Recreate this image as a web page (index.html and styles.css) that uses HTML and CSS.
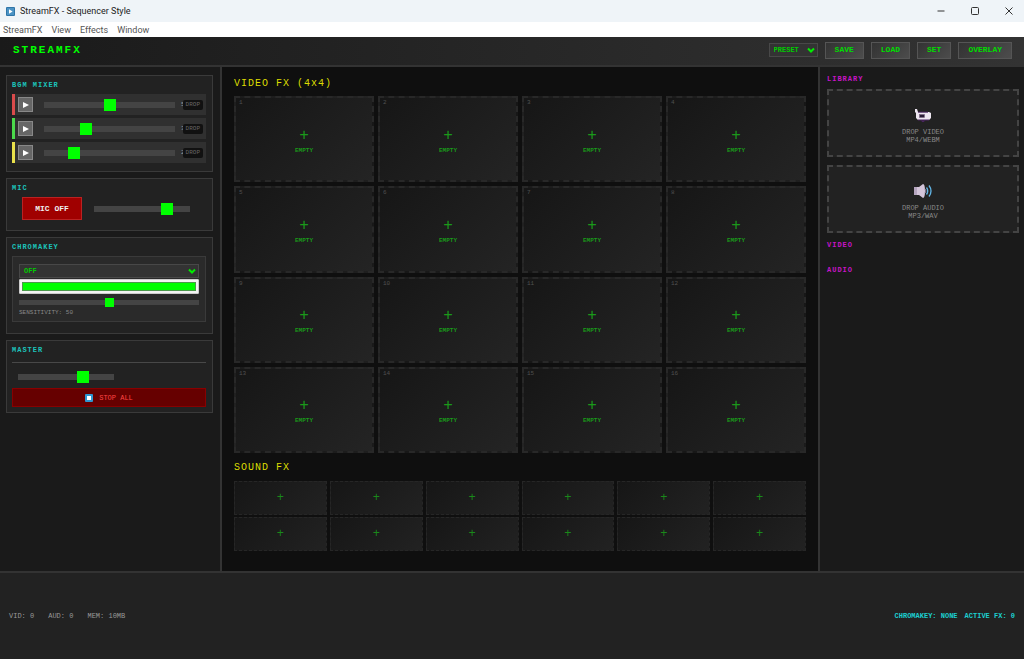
FILE: index.html
```html
<!DOCTYPE html>
<html lang="en">
<head>
  <meta charset="UTF-8">
  <meta name="viewport" content="width=device-width, initial-scale=1.0">
  <title>StreamFX - Sequencer Style</title>
  <link rel="stylesheet" href="styles.css">
</head>
<body>
  <div class="titlebar">
    <svg class="app-icon" viewBox="0 0 9 9"><rect width="9" height="9" rx="1" fill="#2f75a8"/><rect x="1" y="1" width="7" height="7" fill="#4b93c4"/><path d="M3 2.2 6.6 4.5 3 6.8Z" fill="#fff"/></svg>
    <span class="app-title">StreamFX - Sequencer Style</span>
    <div class="window-controls">
      <button aria-label="Minimize"><svg viewBox="0 0 10 10"><path d="M1.5 5H8.5"/></svg></button>
      <button aria-label="Maximize"><svg viewBox="0 0 10 10"><rect x="1.5" y="1.5" width="7" height="7" rx="1"/></svg></button>
      <button aria-label="Close"><svg viewBox="0 0 10 10"><path d="M1.5 1.5 8.5 8.5M8.5 1.5 1.5 8.5"/></svg></button>
    </div>
  </div>

  <nav class="menubar">
    <a href="#">StreamFX</a>
    <a href="#">View</a>
    <a href="#">Effects</a>
    <a href="#">Window</a>
  </nav>

  <header class="header">
    <h1>STREAMFX</h1>
    <div class="header-controls">
      <div class="select-wrap preset">
        <select aria-label="Preset"><option>PRESET</option></select>
        <svg viewBox="0 0 8 6"><path d="M1 1.5 4 4.5 7 1.5"/></svg>
      </div>
      <button class="btn">SAVE</button>
      <button class="btn">LOAD</button>
      <button class="btn">SET</button>
      <button class="btn">OVERLAY</button>
    </div>
  </header>

  <main class="main">
    <!-- Left: mixer controls -->
    <aside class="controls">
      <section class="panel panel-bgm">
        <h2>BGM MIXER</h2>
        <div class="tracks">
          <div class="track track-red">
            <button class="play" aria-label="Play track 1"><svg viewBox="0 0 6 6"><path d="M0 0 6 3 0 6Z"/></svg></button>
            <input type="range" value="50" aria-label="Track 1 volume">
            <span class="volume">50</span>
            <span class="drop-tag">DROP</span>
          </div>
          <div class="track track-green">
            <button class="play" aria-label="Play track 2"><svg viewBox="0 0 6 6"><path d="M0 0 6 3 0 6Z"/></svg></button>
            <input type="range" value="30" aria-label="Track 2 volume">
            <span class="volume">30</span>
            <span class="drop-tag">DROP</span>
          </div>
          <div class="track track-yellow">
            <button class="play" aria-label="Play track 3"><svg viewBox="0 0 6 6"><path d="M0 0 6 3 0 6Z"/></svg></button>
            <input type="range" value="20" aria-label="Track 3 volume">
            <span class="volume">20</span>
            <span class="drop-tag">DROP</span>
          </div>
        </div>
      </section>

      <section class="panel panel-mic">
        <h2>MIC</h2>
        <div class="mic-row">
          <button class="mic-btn">MIC OFF</button>
          <input type="range" class="short" value="80" aria-label="Mic volume">
        </div>
      </section>

      <section class="panel panel-chroma">
        <h2>CHROMAKEY</h2>
        <div class="chroma-box">
          <div class="select-wrap">
            <select aria-label="Chromakey mode"><option>OFF</option></select>
            <svg viewBox="0 0 8 6"><path d="M1 1.5 4 4.5 7 1.5"/></svg>
          </div>
          <input type="color" value="#00ff00" aria-label="Key colour">
          <input type="range" class="thin" id="sensitivity" value="50">
          <label for="sensitivity">SENSITIVITY: 50</label>
        </div>
      </section>

      <section class="panel panel-master">
        <h2>MASTER</h2>
        <div class="master-row">
          <input type="range" class="short" value="70" aria-label="Master volume">
        </div>
        <button class="stop-btn">
          <svg viewBox="0 0 8 8"><rect width="8" height="8" rx="1" fill="#2e96d0"/><rect x="2" y="2" width="4" height="4" fill="#fff"/></svg>
          STOP ALL
        </button>
      </section>
    </aside>

    <!-- Center: effect pads -->
    <section class="pads">
      <h2>VIDEO FX (4x4)</h2>
      <div class="video-grid">
        <button class="slot"><span class="num">1</span><span class="plus">+</span>EMPTY</button>
        <button class="slot"><span class="num">2</span><span class="plus">+</span>EMPTY</button>
        <button class="slot"><span class="num">3</span><span class="plus">+</span>EMPTY</button>
        <button class="slot"><span class="num">4</span><span class="plus">+</span>EMPTY</button>
        <button class="slot"><span class="num">5</span><span class="plus">+</span>EMPTY</button>
        <button class="slot"><span class="num">6</span><span class="plus">+</span>EMPTY</button>
        <button class="slot"><span class="num">7</span><span class="plus">+</span>EMPTY</button>
        <button class="slot"><span class="num">8</span><span class="plus">+</span>EMPTY</button>
        <button class="slot"><span class="num">9</span><span class="plus">+</span>EMPTY</button>
        <button class="slot"><span class="num">10</span><span class="plus">+</span>EMPTY</button>
        <button class="slot"><span class="num">11</span><span class="plus">+</span>EMPTY</button>
        <button class="slot"><span class="num">12</span><span class="plus">+</span>EMPTY</button>
        <button class="slot"><span class="num">13</span><span class="plus">+</span>EMPTY</button>
        <button class="slot"><span class="num">14</span><span class="plus">+</span>EMPTY</button>
        <button class="slot"><span class="num">15</span><span class="plus">+</span>EMPTY</button>
        <button class="slot"><span class="num">16</span><span class="plus">+</span>EMPTY</button>
      </div>
      <h2>SOUND FX</h2>
      <div class="sound-grid">
        <button class="sound">+</button>
        <button class="sound">+</button>
        <button class="sound">+</button>
        <button class="sound">+</button>
        <button class="sound">+</button>
        <button class="sound">+</button>
        <button class="sound">+</button>
        <button class="sound">+</button>
        <button class="sound">+</button>
        <button class="sound">+</button>
        <button class="sound">+</button>
        <button class="sound">+</button>
      </div>
    </section>

    <!-- Right: media library -->
    <aside class="library">
      <h2>LIBRARY</h2>
      <div class="dropzone">
        <svg viewBox="0 0 20 18"><path d="M2 3H4L5 6H16L18 7V12L16 14H5L3 12V7L2 6Z" fill="#eee6f1"/><path d="M5 6.2H15M5 14H16M9 14V15.5H11V14" fill="none" stroke="#4a2560" stroke-width="1"/><rect x="6.500" y="8.500" width="5" height="3" fill="#2a1d35" stroke="#7a6685" stroke-width=".6"/></svg>
        <span>DROP VIDEO</span>
        <span>MP4/WEBM</span>
      </div>
      <div class="dropzone">
        <svg viewBox="0 0 20 18"><path d="M1 5H6L10 2Q12 2 12 9T10 16L6 13H1Z" fill="#d3c4d9"/><path d="M1 5H4V13H1Z" fill="#b5a5bf"/><path d="M12 7Q14 9 12 11" stroke="#9b8aa8" fill="none"/><path d="M13.5 5.5Q16 9 13.5 12.5M16 3.5Q20 9 16 14.5" fill="none" stroke="#62b5e5" stroke-width="1.3"/></svg>
        <span>DROP AUDIO</span>
        <span>MP3/WAV</span>
      </div>
      <h2>VIDEO</h2>
      <h2>AUDIO</h2>
    </aside>
  </main>

  <footer class="status">
    <div class="stats">
      <span>VID: 0</span>
      <span>AUD: 0</span>
      <span>MEM: 10MB</span>
    </div>
    <div class="active">
      <span>CHROMAKEY: NONE</span>
      <span>ACTIVE FX: 0</span>
    </div>
  </footer>
</body>
</html>
```
FILE: styles.css
```css
* {
  margin: 0;
  padding: 0;
  box-sizing: border-box;
}

body {
  display: flex;
  flex-direction: column;
  min-height: 100vh;
  font-family: 'Courier New', 'Liberation Mono', monospace;
  font-size: 7px;
  line-height: 8px;
  background: #111;
  color: #0f0;
}

button, select {
  font: inherit;
  color: inherit;
  cursor: pointer;
}

h2 {
  font-size: 7px;
  line-height: 8px;
  letter-spacing: 1px;
}

/* Window frame */
.titlebar {
  display: flex;
  align-items: center;
  height: 22px;
  padding: 0 6px;
  gap: 5px;
  background: #eff4f8;
  color: #222;
  font-family: Roboto, sans-serif;
  font-size: 9px;
}

.app-icon {
  width: 9px;
  height: 9px;
}

.window-controls {
  display: flex;
  gap: 24px;
  margin-left: auto;
  padding-right: 4px;
}

.window-controls button {
  display: flex;
  border: none;
  background: none;
}

.window-controls svg {
  width: 10px;
  height: 10px;
  fill: none;
  stroke: #333;
  stroke-width: 1;
}

.menubar {
  display: flex;
  align-items: center;
  gap: 9px;
  height: 15px;
  padding: 0 3px;
  background: #fff;
  font-family: Roboto, sans-serif;
  font-size: 9px;
}

.menubar a {
  color: #555;
  text-decoration: none;
}

/* Header */
.header {
  display: flex;
  justify-content: space-between;
  align-items: center;
  height: 30px;
  padding: 0 12px 2px 13px;
  background: linear-gradient(90deg, #1a1a1a, #333);
  border-bottom: 2px solid #333;
}

.header h1 {
  font-size: 11px;
  line-height: 12px;
  letter-spacing: 2px;
}

.header-controls {
  display: flex;
  align-items: center;
  gap: 7px;
}

.btn {
  height: 17px;
  padding: 0 9px;
  background: linear-gradient(135deg, #333, #4c4c4c);
  border: 1px solid #555;
  color: #0d0;
  font-size: 8px;
  font-weight: bold;
}

.select-wrap {
  position: relative;
  display: flex;
}

.select-wrap select {
  width: 100%;
  height: 14px;
  padding: 0 4px;
  appearance: none;
  background: #333;
  border: 1px solid #484848;
  color: #0c0;
  font-weight: bold;
}

.select-wrap svg {
  position: absolute;
  right: 3px;
  top: 4px;
  width: 8px;
  height: 6px;
  fill: none;
  stroke: #0e0;
  stroke-width: 2;
  pointer-events: none;
}

.preset {
  width: 49px;
}

/* Three column layout */
.main {
  flex: 1;
  display: grid;
  grid-template-columns: 222px 1fr 206px;
}

/* Controls */
.controls {
  display: flex;
  flex-direction: column;
  gap: 6px;
  padding: 8px 7px 8px 6px;
  background: #1a1a1a;
  border-right: 2px solid #333;
}

.panel {
  padding: 5px 6px 6px 5px;
  background: #222;
  border: 1px solid #3a3a3a;
}

.panel h2 {
  color: #1cc4bc;
}

.panel-bgm {
  padding-bottom: 8px;
}

.tracks {
  display: flex;
  flex-direction: column;
  gap: 3px;
  margin-top: 5px;
}

.track {
  position: relative;
  display: flex;
  align-items: center;
  height: 21px;
  padding: 0 3px;
  background: #303030;
  border-left: 3px solid;
}

.track-red {
  border-color: #d94b4b;
}

.track-green {
  border-color: #4bd94b;
}

.track-yellow {
  border-color: #e8e04b;
}

.play {
  display: flex;
  align-items: center;
  justify-content: center;
  width: 15px;
  height: 15px;
  background: #666;
  border: 1px solid #888;
}

.play svg {
  width: 6px;
  height: 6px;
  fill: #fff;
}

.track input {
  flex: 1;
  min-width: 0;
  margin: 0 6px 0 11px;
}

.volume {
  width: 22px;
  color: #999;
  font-size: 6px;
}

.drop-tag {
  position: absolute;
  right: 3px;
  padding: 1px 3px;
  background: #111;
  border-radius: 2px;
  color: #666;
  font-size: 6px;
}

input[type="range"] {
  appearance: none;
  height: 6px;
  background: #444;
}

input[type="range"]::-webkit-slider-thumb {
  appearance: none;
  width: 12px;
  height: 12px;
  background: #0f0;
}

.short {
  width: 96px;
}

.panel-mic {
  padding-bottom: 10px;
}

.mic-row {
  display: flex;
  align-items: center;
  gap: 12px;
  margin-top: 5px;
  padding-left: 10px;
}

.mic-btn {
  width: 60px;
  height: 23px;
  background: #a00000;
  border: 1px solid #b22;
  color: #eee;
  font-size: 8px;
  font-weight: bold;
}

.panel-chroma {
  padding-bottom: 11px;
}

.chroma-box {
  display: flex;
  flex-direction: column;
  margin-top: 5px;
  padding: 7px 6px 4px;
  background: #2a2a2a;
  border: 1px solid #3a3a3a;
}

.chroma-box input[type="color"] {
  appearance: none;
  width: 100%;
  height: 15px;
  margin-top: 1px;
  padding: 2px;
  background: #f4f4f4;
  border: 1px solid #ccc;
  border-radius: 1px;
}

.chroma-box input::-webkit-color-swatch-wrapper {
  padding: 0;
}

.chroma-box input::-webkit-color-swatch {
  border: 1px solid #4a9a4a;
}

.chroma-box .thin {
  height: 5px;
  margin: 6px 0 4px;
}

.chroma-box .thin::-webkit-slider-thumb {
  width: 9px;
  height: 9px;
}

.chroma-box label {
  color: #888;
  font-size: 6px;
}

.panel-master {
  padding-bottom: 5px;
}

.master-row {
  display: flex;
  margin: 8px 0;
  padding: 11px 0 0 6px;
  border-top: 1px solid #484848;
}

.stop-btn {
  display: flex;
  align-items: center;
  justify-content: center;
  gap: 6px;
  width: 100%;
  height: 19px;
  background: #600;
  border: 1px solid #800;
  color: #f44;
}

.stop-btn svg {
  width: 8px;
  height: 8px;
}

/* Effect pads */
.pads {
  display: flex;
  flex-direction: column;
  padding: 11px 12px 20px;
  background: #0f0f0f;
}

.pads h2 {
  font-size: 10px;
  line-height: 12px;
  font-weight: normal;
  color: #dd0;
}

.video-grid {
  flex: 1;
  display: grid;
  grid-template-columns: repeat(4, 1fr);
  grid-auto-rows: 1fr;
  gap: 4px;
  margin: 6px 0 9px;
}

.slot {
  position: relative;
  display: flex;
  flex-direction: column;
  align-items: center;
  justify-content: center;
  min-height: 60px;
  padding-top: 4px;
  background: linear-gradient(135deg, #161616, #242424);
  border: 2px dashed #282828;
  color: #1a991a;
  font-size: 6px;
  font-weight: bold;
}

.num {
  position: absolute;
  top: 1px;
  left: 3px;
  color: #505050;
  font-weight: normal;
}

.plus {
  margin-bottom: 3px;
  font-size: 16px;
  line-height: 16px;
  font-weight: normal;
}

.sound-grid {
  display: grid;
  grid-template-columns: repeat(6, 1fr);
  gap: 2px 3px;
  margin-top: 7px;
}

.sound {
  height: 34px;
  background: linear-gradient(135deg, #161616, #222);
  border: 1px dashed #262626;
  color: #1a881a;
  font-size: 12px;
}

/* Library */
.library {
  padding: 8px 5px 8px 7px;
  background: #1a1a1a;
  border-left: 2px solid #333;
}

.library h2 {
  margin-bottom: 17px;
  color: #c814c8;
}

.library h2:first-child {
  margin-bottom: 6px;
}

.dropzone {
  display: flex;
  flex-direction: column;
  align-items: center;
  justify-content: center;
  height: 68px;
  margin-bottom: 8px;
  padding-top: 4px;
  background: #222;
  border: 2px dashed #444;
  color: #888;
}

.dropzone svg {
  width: 20px;
  height: 18px;
  margin-bottom: 4px;
}

/* Status bar */
.status {
  display: flex;
  justify-content: space-between;
  align-items: center;
  padding: 39px 9px;
  background: #222;
  border-top: 2px solid #333;
  color: #999;
}

.stats {
  display: flex;
  gap: 14px;
}

.active {
  display: flex;
  gap: 7px;
  color: #1ccfcf;
  font-weight: bold;
}
```
